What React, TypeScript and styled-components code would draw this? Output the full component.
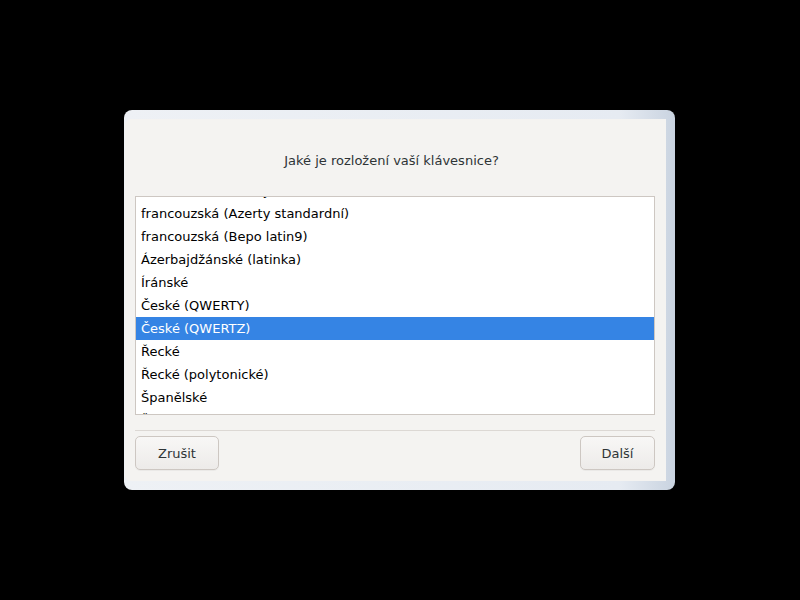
import React from "react";
import styled, { createGlobalStyle } from "styled-components";

const Global = createGlobalStyle`
  html, body { margin: 0; padding: 0; background: #000; }
  body { font-family: "DejaVu Sans", "Noto Sans", sans-serif; }
`;

const Screen = styled.div`
  width: 800px;
  height: 600px;
  box-sizing: border-box;
  padding-left: 124px;
  display: flex;
  align-items: center;
  justify-content: flex-start;
  background: #000;
`;

const Frame = styled.div`
  width: 551px;
  height: 380px;
  box-sizing: border-box;
  border-radius: 8px;
  padding: 9px 9px 9px 1px;
  background: linear-gradient(90deg, #eef1f5 0%, #e6ebf2 90%, #c9d3e0 100%);
  display: flex;
`;

const Panel = styled.div`
  flex: 1;
  background: #f4f3f1;
  border-radius: 6px 0 0 6px;
  padding: 0 11px 11px 10px;
  display: flex;
  flex-direction: column;
  color: #2e3436;
  font-size: 13px;
`;

const Title = styled.div`
  margin-top: 34px;
  height: 16px;
  line-height: 16px;
  text-align: center;
  padding-right: 7px;
`;

const ListBox = styled.div`
  margin-top: 27px;
  height: 219px;
  box-sizing: border-box;
  border: 1px solid #cdc7c2;
  background: #fff;
  overflow: hidden;
`;

const ListInner = styled.div`
  margin-top: -18px;
`;

const Row = styled.div<{ $selected?: boolean }>`
  height: 23px;
  line-height: 23px;
  padding-left: 5px;
  white-space: nowrap;
  background: ${(p) => (p.$selected ? "#3584e4" : "transparent")};
  color: ${(p) => (p.$selected ? "#ffffff" : "#000000")};
`;

const Separator = styled.div`
  margin-top: 15px;
  height: 1px;
  background: #dcd8d4;
`;

const Actions = styled.div`
  margin-top: 5px;
  display: flex;
  justify-content: space-between;
`;

const Button = styled.button<{ $w: number }>`
  width: ${(p) => p.$w}px;
  height: 34px;
  box-sizing: border-box;
  border: 1px solid #cdc7c2;
  border-radius: 5px;
  background: linear-gradient(180deg, #f8f7f6 0%, #edebe9 100%);
  box-shadow: 0 1px 0 rgba(0, 0, 0, 0.04);
  font-family: "DejaVu Sans", "Noto Sans", sans-serif;
  font-size: 13px;
  color: #2e3436;
  padding: 0;
`;

const items = [
  "francouzská (Azerty)",
  "francouzská (Azerty standardní)",
  "francouzská (Bepo latin9)",
  "Ázerbajdžánské (latinka)",
  "Íránské",
  "České (QWERTY)",
  "České (QWERTZ)",
  "Řecké",
  "Řecké (polytonické)",
  "Španělské",
  "Švédské",
];

export default function App() {
  return (
    <>
      <Global />
      <Screen>
        <Frame>
          <Panel>
            <Title>Jaké je rozložení vaší klávesnice?</Title>
            <ListBox>
              <ListInner>
                {items.map((t) => (
                  <Row key={t} $selected={t === "České (QWERTZ)"}>
                    {t}
                  </Row>
                ))}
              </ListInner>
            </ListBox>
            <Separator />
            <Actions>
              <Button $w={84}>Zrušit</Button>
              <Button $w={75}>Další</Button>
            </Actions>
          </Panel>
        </Frame>
      </Screen>
    </>
  );
}
